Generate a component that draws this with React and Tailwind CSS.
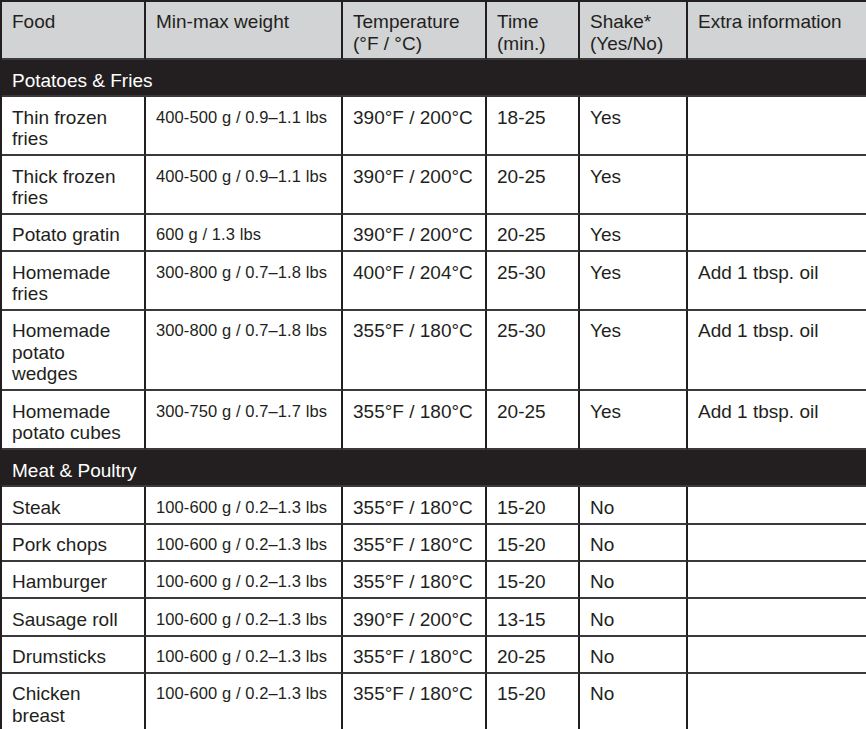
import React from "react";

const cols = "grid-cols-[144px_197px_144px_93px_108px_182px]";

const potatoes = [
  ["Thin frozen fries", "400-500 g / 0.9–1.1 lbs", "390°F / 200°C", "18-25", "Yes", ""],
  ["Thick frozen fries", "400-500 g / 0.9–1.1 lbs", "390°F / 200°C", "20-25", "Yes", ""],
  ["Potato gratin", "600 g / 1.3 lbs", "390°F / 200°C", "20-25", "Yes", ""],
  ["Homemade fries", "300-800 g / 0.7–1.8 lbs", "400°F / 204°C", "25-30", "Yes", "Add 1 tbsp. oil"],
  ["Homemade potato wedges", "300-800 g / 0.7–1.8 lbs", "355°F / 180°C", "25-30", "Yes", "Add 1 tbsp. oil"],
  ["Homemade potato cubes", "300-750 g / 0.7–1.7 lbs", "355°F / 180°C", "20-25", "Yes", "Add 1 tbsp. oil"],
];

const meat = [
  ["Steak", "100-600 g / 0.2–1.3 lbs", "355°F / 180°C", "15-20", "No", ""],
  ["Pork chops", "100-600 g / 0.2–1.3 lbs", "355°F / 180°C", "15-20", "No", ""],
  ["Hamburger", "100-600 g / 0.2–1.3 lbs", "355°F / 180°C", "15-20", "No", ""],
  ["Sausage roll", "100-600 g / 0.2–1.3 lbs", "390°F / 200°C", "13-15", "No", ""],
  ["Drumsticks", "100-600 g / 0.2–1.3 lbs", "355°F / 180°C", "20-25", "No", ""],
  ["Chicken breast", "100-600 g / 0.2–1.3 lbs", "355°F / 180°C", "15-20", "No", ""],
];

const cell =
  "border-r-2 border-b-2 border-r-[#231f20] border-b-[#3a3a3a] pl-[10px] pr-[6px] pt-[9.5px] pb-[4.3px]";

function Row({ r }) {
  return (
    <>
      <div className={cell + " max-w-[144px] pr-[20px]"}>{r[0]}</div>
      <div className={cell + " text-[16.5px] tracking-[0.1px]"}>{r[1]}</div>
      <div className={cell}>{r[2]}</div>
      <div className={cell}>{r[3]}</div>
      <div className={cell}>{r[4]}</div>
      <div className={cell}>{r[5]}</div>
    </>
  );
}

function Section({ title }) {
  return (
    <div className="col-span-6 bg-[#231f20] text-white border-b-2 border-b-[#3a3a3a] pl-[10px] pt-[9.5px] pb-[4.3px]">
      {title}
    </div>
  );
}

export default function App() {
  const head = "border-r-2 border-b-2 border-r-[#231f20] border-b-[#3a3a3a] bg-[#d1d3d4] pl-[10px] pr-[4px] pt-[9px] pb-[4px]";
  return (
    <div className="w-[866px] h-[729px] overflow-hidden bg-white">
      <div
        className={`grid ${cols} w-[870px] border-l-2 border-t-2 border-[#231f20] text-[#231f20] text-[19px] leading-[21.5px]`}
        style={{ fontFamily: '"Liberation Sans", Arial, sans-serif' }}
      >
        <div className={head}>Food</div>
        <div className={head}>Min-max weight</div>
        <div className={head}>
          Temperature
          <br />
          (°F / °C)
        </div>
        <div className={head}>
          Time
          <br />
          (min.)
        </div>
        <div className={head}>
          Shake*
          <br />
          (Yes/No)
        </div>
        <div className={head}>Extra information</div>

        <Section title="Potatoes & Fries" />
        {potatoes.map((r, i) => (
          <Row key={"p" + i} r={r} />
        ))}
        <Section title="Meat & Poultry" />
        {meat.map((r, i) => (
          <Row key={"m" + i} r={r} />
        ))}
      </div>
    </div>
  );
}
